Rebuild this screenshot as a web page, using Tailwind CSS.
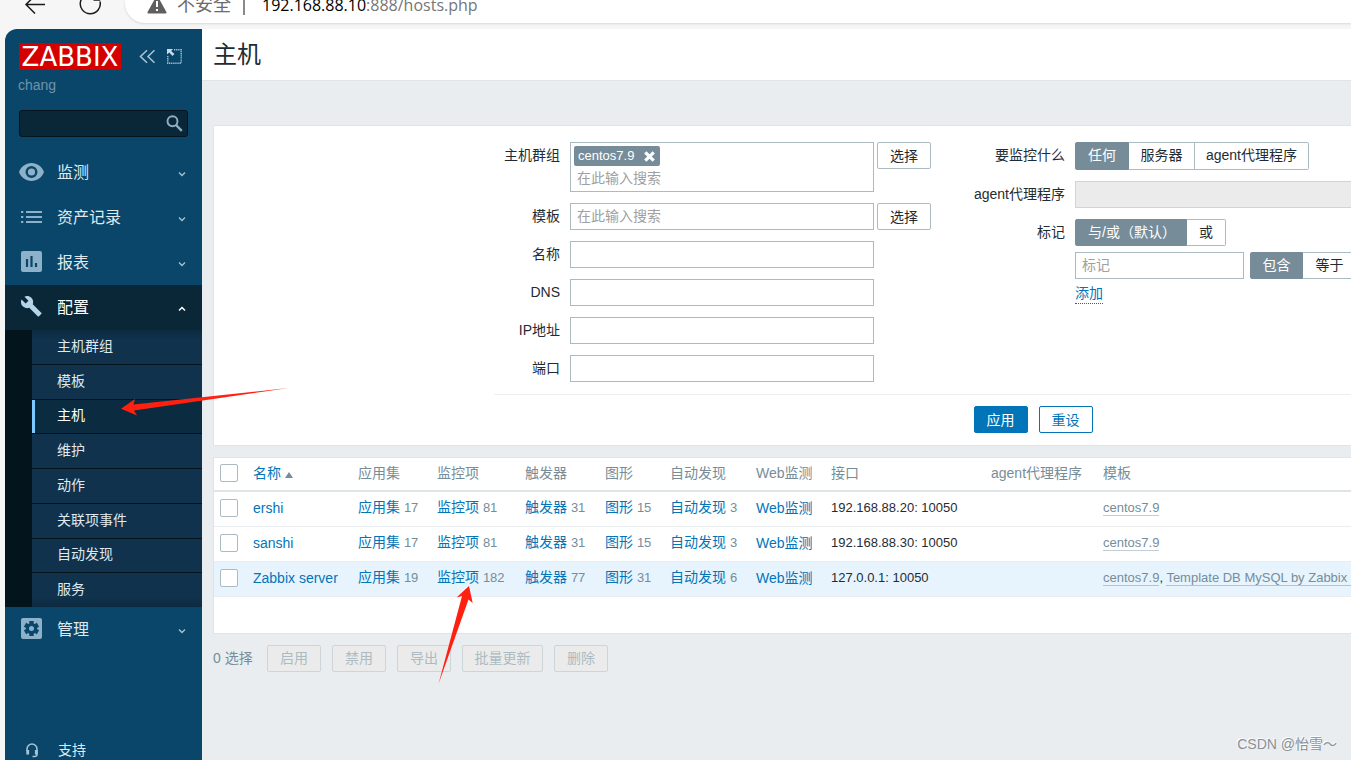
<!DOCTYPE html>
<html lang="zh-CN">
<head>
<meta charset="utf-8">
<meta name="viewport" content="width=device-width, initial-scale=1">
<title>主机</title>
<script src="https://cdn.jsdelivr.net/npm/@tailwindcss/browser@4"></script>
</head>
<body class="relative flex h-screen flex-col overflow-hidden bg-[#f6f6f6] font-['Liberation_Sans','Noto_Sans_CJK_SC',sans-serif] text-sm leading-5 text-[#1f2c33]">

<!-- Browser toolbar -->
<div class="flex h-7 shrink-0 items-start overflow-hidden pl-6 text-[#1b1b1b]">
  <button aria-label="后退" class="h-4 w-6"><svg class="h-5 w-6 -mt-2" viewBox="0 0 24 20" fill="none" stroke="currentColor" stroke-width="1.5"><path d="M21 10.500H2M11 1.500l-9 9 9 9"/></svg></button>
  <button aria-label="刷新" class="ml-[27px] h-4 w-8"><svg class="h-6 w-8 -mt-2" viewBox="0 0 32 24" fill="none" stroke="currentColor" stroke-width="1.5"><path d="M25 9.500A10 10 0 1 1 20 3M24.500 1v7h-6"/></svg></button>
  <div class="ml-[18px] flex h-[23px] flex-1 items-start rounded-bl-[20px] bg-white pl-[22px] shadow-sm">
    <svg class="h-[14px] w-5" viewBox="0 0 20 14"><path d="M10-5L.6 12c-.4 1 0 1.500 1 1.500h16.800c1 0 1.400-.5 1-1.500z" fill="#5f5f5f"/><path d="M10 1v6M10 9v2" stroke="#fff" stroke-width="2"/></svg>
    <span class="-mt-2 ml-[10px] text-lg leading-[26px] text-[#6b6b6b]">不安全</span>
    <span class="ml-3 h-[15px] w-0.5 bg-[#8a8a8a]"></span>
    <span class="-mt-2 ml-[17px] font-['Open_Sans',sans-serif] text-base leading-[26px] text-[#767676]"><span class="text-black">192.168.88.10</span>:888/hosts.php</span>
  </div>
</div>

<div class="flex min-h-0 flex-1 pl-[5px] pt-px">
  <!-- Sidebar -->
  <aside class="flex w-[197px] shrink-0 flex-col overflow-hidden rounded-tl-xl bg-[#0a466a] text-[#dfe9ef]">
    <div class="flex items-center pl-[14px] pt-[14px]">
      <a href="#" class="flex h-[27px] w-[102px] items-center justify-center bg-[#d40000] pt-0.5 font-['DejaVu_Sans',sans-serif] text-[26px] leading-[27px] text-white">ZABBIX</a>
      <button aria-label="折叠" class="ml-[18px]"><svg class="h-[15px] w-4" viewBox="0 0 16 15" fill="none" stroke="#a9c3d3" stroke-width="1.600"><path d="M8 1.200L1.500 7.500 8 13.800M15.500 1.200L9 7.500l6.500 6.300"/></svg></button>
      <button aria-label="全屏" class="ml-3"><svg class="h-[15px] w-[15px]" viewBox="0 0 15 15"><path d="M7 .8h7.200v13.400H.8V7" fill="none" stroke="#a9c3d3" stroke-width="1.400" stroke-dasharray="1.300 .8"/><path d="M0 0h6L4.200 1.900l3.200 3.200-1.800 1.800-3.400-3.300L0 5.500z" fill="#c8dbe6"/></svg></button>
    </div>
    <div class="mt-[5px] pl-[13px] text-[#6f95ab]">chang</div>
    <div class="relative mx-[14px] mt-[15px]">
      <input type="text" aria-label="搜索" class="block h-[27px] w-full rounded-[3px] border border-[#04141d] bg-[#0a2737] px-2 outline-none">
      <button aria-label="搜索" class="absolute right-1 top-1"><svg class="h-[19px] w-[19px]" viewBox="0 0 19 19" fill="none" stroke="#8fb0c4"><circle cx="7.500" cy="7.200" r="5" stroke-width="1.900"/><path d="M11 11l5.800 5.800" stroke-width="2.400"/></svg></button>
    </div>

    <nav class="mt-[13px] text-base">
      <a href="#" class="flex h-[45px] items-center pl-[14px] pr-[14px]"><svg class="mb-0.5 h-[18px] w-[25px]" viewBox="0 0 25 18"><path fill-rule="evenodd" fill="#8cb1c9" d="M12.500 0C6.800 0 2 3.700 0 9c2 5.300 6.800 9 12.500 9S23 14.300 25 9C23 3.700 18.200 0 12.500 0zm0 15a6 6 0 1 1 0-12 6 6 0 0 1 0 12zm0-2.400a3.600 3.600 0 1 0 0-7.200 3.600 3.600 0 0 0 0 7.200z"/></svg><span class="ml-[13px] flex-1">监测</span><svg class="mt-0.5 h-2 w-3" viewBox="0 0 12 8" fill="none" stroke="#a9c3d3" stroke-width="1.300"><path d="M3 2.500l3 3 3-3"/></svg></a>
      <a href="#" class="flex h-[45px] items-center pl-4 pr-[14px]"><svg class="mb-0.5 h-3 w-[21px]" viewBox="0 0 21 12" fill="#8cb1c9"><path d="M0 0h2.300v2H0zM5 0h16v2H5zM0 5h2.300v2H0zM5 5h16v2H5zM0 10h2.300v2H0zM5 10h16v2H5z"/></svg><span class="ml-[15px] flex-1">资产记录</span><svg class="mt-0.5 h-2 w-3" viewBox="0 0 12 8" fill="none" stroke="#a9c3d3" stroke-width="1.300"><path d="M3 2.500l3 3 3-3"/></svg></a>
      <a href="#" class="flex h-[45px] items-center pl-4 pr-[14px]"><svg class="mb-0.5 h-[21px] w-[21px]" viewBox="0 0 21 21"><rect width="21" height="21" rx="2" fill="#8cb1c9"/><path d="M6 8v8M10.500 5v11M15 12v4" stroke="#0a466a" stroke-width="2.200"/></svg><span class="ml-[15px] flex-1">报表</span><svg class="mt-0.5 h-2 w-3" viewBox="0 0 12 8" fill="none" stroke="#a9c3d3" stroke-width="1.300"><path d="M3 2.500l3 3 3-3"/></svg></a>
      <a href="#" class="flex h-[45px] items-center bg-[#0a2737] pl-4 pr-[14px] text-white"><svg class="mb-0.5 h-[21px] w-[21px]" viewBox="1 1 22.500 22.500"><path fill="#b4d4e8" d="M22.700 19l-9.100-9.100c.9-2.300.4-5-1.500-6.900-2-2-5-2.400-7.400-1.300L9 6 6 9 1.600 4.700C.4 7.100.9 10.100 2.900 12.100c1.900 1.900 4.600 2.400 6.900 1.500l9.100 9.100c.4.4 1 .4 1.400 0l2.300-2.300c.5-.4.5-1.100.1-1.400z"/></svg><span class="ml-[15px] flex-1">配置</span><svg class="mt-0.5 h-2 w-3" viewBox="0 0 12 8" fill="none" stroke="#fff" stroke-width="1.500"><path d="M3 5.500l3-3 3 3"/></svg></a>
      <div class="flex h-[277px] flex-col bg-[#04141d] pl-[27px] text-sm [&>a]:pb-0.5">
        <a href="#" class="flex flex-1 items-center border-b border-[#04141d] bg-linear-to-b from-[#0d2b40] to-[#10324d] to-30% pl-[25px]">主机群组</a>
        <a href="#" class="flex flex-1 items-center border-b border-[#04141d] bg-[#10324d] pl-[25px]">模板</a>
        <a href="#" class="flex flex-1 items-center border-b border-[#04141d] bg-[#0b2c40] text-white"><span class="w-[3px] self-stretch -mb-0.5 bg-[#7dc8ff]"></span><span class="pl-[22px]">主机</span></a>
        <a href="#" class="flex flex-1 items-center border-b border-[#04141d] bg-[#10324d] pl-[25px]">维护</a>
        <a href="#" class="flex flex-1 items-center border-b border-[#04141d] bg-[#10324d] pl-[25px]">动作</a>
        <a href="#" class="flex flex-1 items-center border-b border-[#04141d] bg-[#10324d] pl-[25px]">关联项事件</a>
        <a href="#" class="flex flex-1 items-center border-b border-[#04141d] bg-[#10324d] pl-[25px]">自动发现</a>
        <a href="#" class="flex flex-1 items-center bg-linear-to-b from-[#10324d] from-70% to-[#0d2b40] pl-[25px]">服务</a>
      </div>
      <a href="#" class="flex h-[45px] items-center pl-4 pr-[14px]"><svg class="mb-0.5 h-[21px] w-[21px]" viewBox="0 0 21 21"><rect width="21" height="21" rx="2" fill="#8cb1c9"/><g stroke="#0a466a" stroke-width="4.400"><path d="M10.500 3v15M4 6.750l13 7.500M4 14.250l13-7.500"/></g><circle cx="10.500" cy="10.500" r="5.600" fill="#0a466a"/><circle cx="10.500" cy="10.500" r="2.500" fill="#8cb1c9"/></svg><span class="ml-[15px] flex-1">管理</span><svg class="mt-0.5 h-2 w-3" viewBox="0 0 12 8" fill="none" stroke="#a9c3d3" stroke-width="1.300"><path d="M3 2.500l3 3 3-3"/></svg></a>
    </nav>
    <a href="#" class="mt-[83px] flex h-[30px] shrink-0 items-center pl-[21px]"><svg class="h-[15px] w-3" viewBox="0 0 12 15" fill="none" stroke="#a9c3d3"><path d="M1 8V6a5 5 0 0 1 10 0v5.500c0 1.500-1 2-2.500 2H6.500" stroke-width="1.500"/><path d="M1.700 7v4.500M10.300 7v4.500" stroke-width="2.800"/></svg><span class="ml-5">支持</span></a>
  </aside>

  <!-- Page -->
  <main class="min-w-0 flex-1 overflow-hidden bg-[#e9edf0]">
    <header class="h-[52px] border-b border-[#dfe4e7] bg-white pl-[11px] pt-3"><h1 class="text-2xl leading-[28px]">主机</h1></header>

    <form class="ml-[11px] mt-11 border-y border-l border-[#dfe4e7] bg-white pb-3 pl-[280px] pt-4" onsubmit="return false">
      <div class="w-[1078px]">
        <div class="flex items-start gap-[9px]">
          <div class="grid w-[437px] grid-cols-[66px_304px_54px] gap-x-[10px] gap-y-[11px]">
            <label for="groups" class="pt-[3px] text-right">主机群组</label>
            <div class="h-[50px] border border-[#acbbc2] px-[3px] pt-[3px]">
              <div class="flex h-5 w-[86px] items-center rounded-[2px] bg-[#768d99] pl-1 text-white"><span class="text-[13px]">centos7.9</span><button type="button" aria-label="移除" class="ml-[10px]"><svg class="h-[11px] w-[11px]" viewBox="0 0 11 11" stroke="#fff" stroke-width="3.200"><path d="M1.300 1.300l8.400 8.400M9.700 1.300L1.300 9.700"/></svg></button></div>
              <input id="groups" type="text" placeholder="在此输入搜索" class="block h-6 w-full px-[3px] outline-none placeholder:text-[#a0a0a0]">
            </div>
            <button type="button" class="-ml-[7px] h-[27px] w-[54px] rounded-[2px] border border-[#acbbc2]">选择</button>

            <label for="tpl" class="pt-[3px] text-right">模板</label>
            <input id="tpl" type="text" placeholder="在此输入搜索" class="h-[27px] border border-[#acbbc2] px-[6px] pb-0.5 outline-none placeholder:text-[#a0a0a0]">
            <button type="button" class="-ml-[7px] h-[27px] w-[54px] rounded-[2px] border border-[#acbbc2]">选择</button>

            <label for="name" class="pt-[3px] text-right">名称</label>
            <input id="name" type="text" class="col-span-2 h-[27px] w-[304px] border border-[#acbbc2] px-[6px] outline-none">
            <label for="dns" class="pt-[3px] text-right">DNS</label>
            <input id="dns" type="text" class="col-span-2 h-[27px] w-[304px] border border-[#acbbc2] px-[6px] outline-none">
            <label for="ip" class="pt-[3px] text-right">IP地址</label>
            <input id="ip" type="text" class="col-span-2 h-[27px] w-[304px] border border-[#acbbc2] px-[6px] outline-none">
            <label for="port" class="pt-[3px] text-right">端口</label>
            <input id="port" type="text" class="col-span-2 h-[27px] w-[304px] border border-[#acbbc2] px-[6px] outline-none">
          </div>

          <div class="grid flex-1 grid-cols-[125px_1fr] gap-x-[10px] gap-y-[11px]">
            <span class="pt-[3px] text-right">要监控什么</span>
            <div class="flex h-7 [&>label]:pb-0.5" role="radiogroup" aria-label="要监控什么">
              <label class="relative flex w-[54px] items-center justify-center rounded-l-[2px] border border-[#acbbc2] has-checked:border-[#768d99] has-checked:bg-[#768d99] has-checked:text-white"><input type="radio" name="mon" class="sr-only" checked>任何</label>
              <label class="relative flex w-[66px] items-center justify-center border-y border-r border-[#acbbc2] has-checked:bg-[#768d99] has-checked:text-white"><input type="radio" name="mon" class="sr-only">服务器</label>
              <label class="relative flex w-[114px] items-center justify-center rounded-r-[2px] border-y border-r border-[#acbbc2] has-checked:bg-[#768d99] has-checked:text-white"><input type="radio" name="mon" class="sr-only">agent代理程序</label>
            </div>

            <label for="proxy" class="pt-[3px] text-right">agent代理程序</label>
            <input id="proxy" type="text" disabled class="h-[27px] w-[304px] border border-[#ccd5d9] bg-[#ebebeb]">

            <span class="pt-[3px] text-right">标记</span>
            <div>
              <div class="flex h-[27px] [&>label]:pb-0.5" role="radiogroup" aria-label="标记">
                <label class="relative flex w-28 items-center rounded-l-[2px] border border-[#acbbc2] pl-3 has-checked:border-[#768d99] has-checked:bg-[#768d99] has-checked:text-white"><input type="radio" name="ev" class="sr-only" checked>与/或（默认）</label>
                <label class="relative flex w-[39px] items-center justify-center rounded-r-[2px] border-y border-r border-[#acbbc2] has-checked:bg-[#768d99] has-checked:text-white"><input type="radio" name="ev" class="sr-only">或</label>
              </div>
              <div class="mt-[6px] flex h-[27px] [&>label]:pb-0.5">
                <input type="text" aria-label="标记" placeholder="标记" class="w-[169px] border border-[#acbbc2] px-[6px] pb-0.5 outline-none placeholder:text-[#a0a0a0]">
                <label class="relative ml-[6px] flex w-[53px] items-center justify-center rounded-l-[2px] border border-[#acbbc2] has-checked:border-[#768d99] has-checked:bg-[#768d99] has-checked:text-white"><input type="radio" name="op" class="sr-only" checked>包含</label>
                <label class="relative flex w-[54px] items-center justify-center rounded-r-[2px] border-y border-r border-[#acbbc2] has-checked:bg-[#768d99] has-checked:text-white"><input type="radio" name="op" class="sr-only">等于</label>
              </div>
              <button type="button" class="mt-[5px] border-b border-dotted border-[#0275b8] leading-[19px] text-[#0275b8]">添加</button>
            </div>
          </div>
        </div>
        <div class="mt-3 flex justify-center gap-[11px] border-t border-[#ebeef0] pt-[11px]">
          <button type="submit" class="h-[27px] w-[54px] rounded-[2px] border border-[#0275b8] bg-[#0275b8] text-white">应用</button>
          <button type="reset" class="h-[27px] w-[54px] rounded-[2px] border border-[#0275b8] text-[#0275b8]">重设</button>
        </div>
      </div>
    </form>

    <div class="ml-[11px] mt-[11px] overflow-hidden border-y border-l border-[#dfe4e7] bg-white pb-9">
      <table class="w-full table-fixed text-left whitespace-nowrap [&_td]:pb-0.5 [&_td]:pl-[6px] [&_th]:pb-[3px] [&_th]:pl-[6px] [&_th]:font-normal [&_tbody_tr]:h-[35px] [&_tbody_tr]:border-b [&_tbody_tr]:border-[#ebeef0] [&_td_span]:text-[13px] [&_td_span]:text-[#768d99]">
        <colgroup><col class="w-[33px]"><col class="w-[105px]"><col class="w-[79px]"><col class="w-[88px]"><col class="w-20"><col class="w-[65px]"><col class="w-[86px]"><col class="w-[75px]"><col class="w-40"><col class="w-28"><col></colgroup>
        <thead>
          <tr class="h-[33px] border-b-2 border-[#dfe4e7] text-[#768d99]">
            <th><input type="checkbox" aria-label="全选" class="block size-[18px] appearance-none rounded-[2px] border border-[#acbbc2] bg-white"></th>
            <th><a href="#" class="flex items-center text-[#0275b8]">名称<svg class="ml-1 mt-1 h-[6px] w-2" viewBox="0 0 8 6"><path d="M4 0l4 6H0z" fill="#768d99"/></svg></a></th>
            <th>应用集</th><th>监控项</th><th>触发器</th><th>图形</th><th>自动发现</th><th>Web监测</th><th>接口</th><th>agent代理程序</th><th>模板</th>
          </tr>
        </thead>
        <tbody class="[&_a]:text-[#0275b8]">
          <tr>
            <td><input type="checkbox" aria-label="ershi" class="block size-[18px] appearance-none rounded-[2px] border border-[#acbbc2] bg-white"></td>
            <td><a href="#">ershi</a></td><td><a href="#">应用集</a> <span>17</span></td><td><a href="#">监控项</a> <span>81</span></td><td><a href="#">触发器</a> <span>31</span></td><td><a href="#">图形</a> <span>15</span></td><td><a href="#">自动发现</a> <span>3</span></td><td><a href="#">Web监测</a></td><td class="text-[13px]">192.168.88.20: 10050</td><td></td>
            <td class="text-[13px]"><a href="#" class="border-b border-[#c3ced4] text-[#768d99]!">centos7.9</a></td>
          </tr>
          <tr>
            <td><input type="checkbox" aria-label="sanshi" class="block size-[18px] appearance-none rounded-[2px] border border-[#acbbc2] bg-white"></td>
            <td><a href="#">sanshi</a></td><td><a href="#">应用集</a> <span>17</span></td><td><a href="#">监控项</a> <span>81</span></td><td><a href="#">触发器</a> <span>31</span></td><td><a href="#">图形</a> <span>15</span></td><td><a href="#">自动发现</a> <span>3</span></td><td><a href="#">Web监测</a></td><td class="text-[13px]">192.168.88.30: 10050</td><td></td>
            <td class="text-[13px]"><a href="#" class="border-b border-[#c3ced4] text-[#768d99]!">centos7.9</a></td>
          </tr>
          <tr class="bg-[#e7f4fe]">
            <td><input type="checkbox" aria-label="Zabbix server" class="block size-[18px] appearance-none rounded-[2px] border border-[#acbbc2] bg-white"></td>
            <td><a href="#">Zabbix server</a></td><td><a href="#">应用集</a> <span>19</span></td><td><a href="#">监控项</a> <span>182</span></td><td><a href="#">触发器</a> <span>77</span></td><td><a href="#">图形</a> <span>31</span></td><td><a href="#">自动发现</a> <span>6</span></td><td><a href="#">Web监测</a></td><td class="text-[13px]">127.0.0.1: 10050</td><td></td>
            <td class="text-[13px]"><a href="#" class="border-b border-[#b3c4ce] text-[#768d99]!">centos7.9</a>, <a href="#" class="border-b border-[#b3c4ce] text-[#768d99]!">Template DB MySQL by Zabbix agent</a></td>
          </tr>
        </tbody>
      </table>
    </div>

    <div class="ml-[11px] mt-[11px] flex items-center gap-[11px] text-[#768d99]">
      <span class="w-[43px]">0 选择</span>
      <button disabled class="h-[27px] w-[54px] rounded-[2px] border border-[#ccd5d9] bg-[#ebebeb] text-[#acbbc2]">启用</button>
      <button disabled class="h-[27px] w-[54px] rounded-[2px] border border-[#ccd5d9] bg-[#ebebeb] text-[#acbbc2]">禁用</button>
      <button disabled class="h-[27px] w-[54px] rounded-[2px] border border-[#ccd5d9] bg-[#ebebeb] text-[#acbbc2]">导出</button>
      <button disabled class="h-[27px] w-[81px] rounded-[2px] border border-[#ccd5d9] bg-[#ebebeb] text-[#acbbc2]">批量更新</button>
      <button disabled class="h-[27px] w-[54px] rounded-[2px] border border-[#ccd5d9] bg-[#ebebeb] text-[#acbbc2]">删除</button>
    </div>
  </main>
</div>

<!-- Annotation arrows over the page -->
<svg class="pointer-events-none absolute left-[120px] top-[386px] h-[31px] w-[170px]" viewBox="120 386 170 31"><path fill="#ff2010" d="M121 408.700L135 399l-1.500 5.500L289 388l-155 22.500 3 5z"/></svg>
<svg class="pointer-events-none absolute left-[437px] top-[585px] h-[100px] w-[37px]" viewBox="437 585 37 100"><path fill="#ff2010" d="M469 586l3.700 17-4.200-3.500L438.500 684 462 596l-5.500 1.500z"/></svg>
<div class="absolute bottom-[6px] right-[14px] text-sm text-[#8a9095] [text-shadow:-1px_-1px_0_#fff]">CSDN @怡雪～</div>
</body>
</html>
